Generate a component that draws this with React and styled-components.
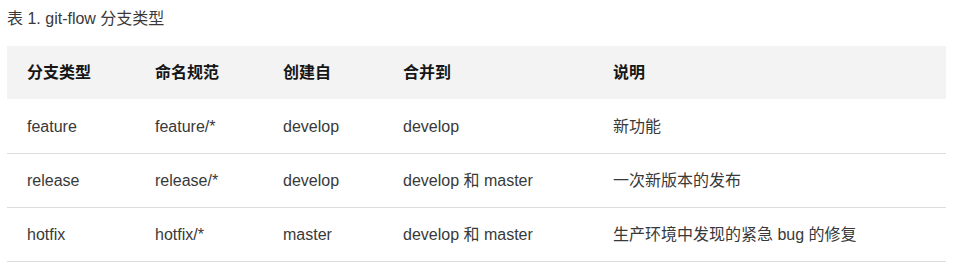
import React from "react";
import styled, { createGlobalStyle } from "styled-components";

const GlobalStyle = createGlobalStyle`
  body {
    margin: 0;
    background: #ffffff;
    font-family: "Liberation Sans", "Noto Sans CJK SC", sans-serif;
  }
`;

const rows = [
  ["feature", "feature/*", "develop", "develop", "新功能"],
  ["release", "release/*", "develop", "develop 和 master", "一次新版本的发布"],
  ["hotfix", "hotfix/*", "master", "develop 和 master", "生产环境中发现的紧急 bug 的修复"],
];

const headers = ["分支类型", "命名规范", "创建自", "合并到", "说明"];
const widths = [128, 128, 120, 210];

const App = () => {
  return (
    <Wrapper>
      <GlobalStyle />
      <Caption>表 1. git-flow 分支类型</Caption>
      <Table>
        <colgroup>
          {widths.map((w, i) => (
            <col key={i} style={{ width: w }} />
          ))}
          <col />
        </colgroup>
        <thead>
          <HeadRow>
            {headers.map((h) => (
              <HeadCell key={h}>{h}</HeadCell>
            ))}
          </HeadRow>
        </thead>
        <tbody>
          {rows.map((r) => (
            <BodyRow key={r[0]}>
              {r.map((c, i) => (
                <Cell key={i}>{c}</Cell>
              ))}
            </BodyRow>
          ))}
        </tbody>
      </Table>
    </Wrapper>
  );
};

const Wrapper = styled.div`
  padding: 9px 18px 0 7px;
`;

const Caption = styled.div`
  font-size: 16px;
  line-height: 20px;
  color: #393939;
  margin-bottom: 17px;
`;

const Table = styled.table`
  width: 939px;
  border-collapse: collapse;
  table-layout: fixed;
`;

const HeadRow = styled.tr`
  background: #f3f3f3;
  height: 53px;
`;

const HeadCell = styled.th`
  text-align: left;
  padding: 0 0 0 20px;
  font-size: 16px;
  line-height: 20px;
  font-weight: 700;
  color: #161616;
`;

const BodyRow = styled.tr`
  height: 54px;
  border-bottom: 1px solid #dcdcdc;
`;

const Cell = styled.td`
  padding: 2px 0 0 20px;
  font-size: 16px;
  line-height: 20px;
  color: #393939;
`;

export default App;
